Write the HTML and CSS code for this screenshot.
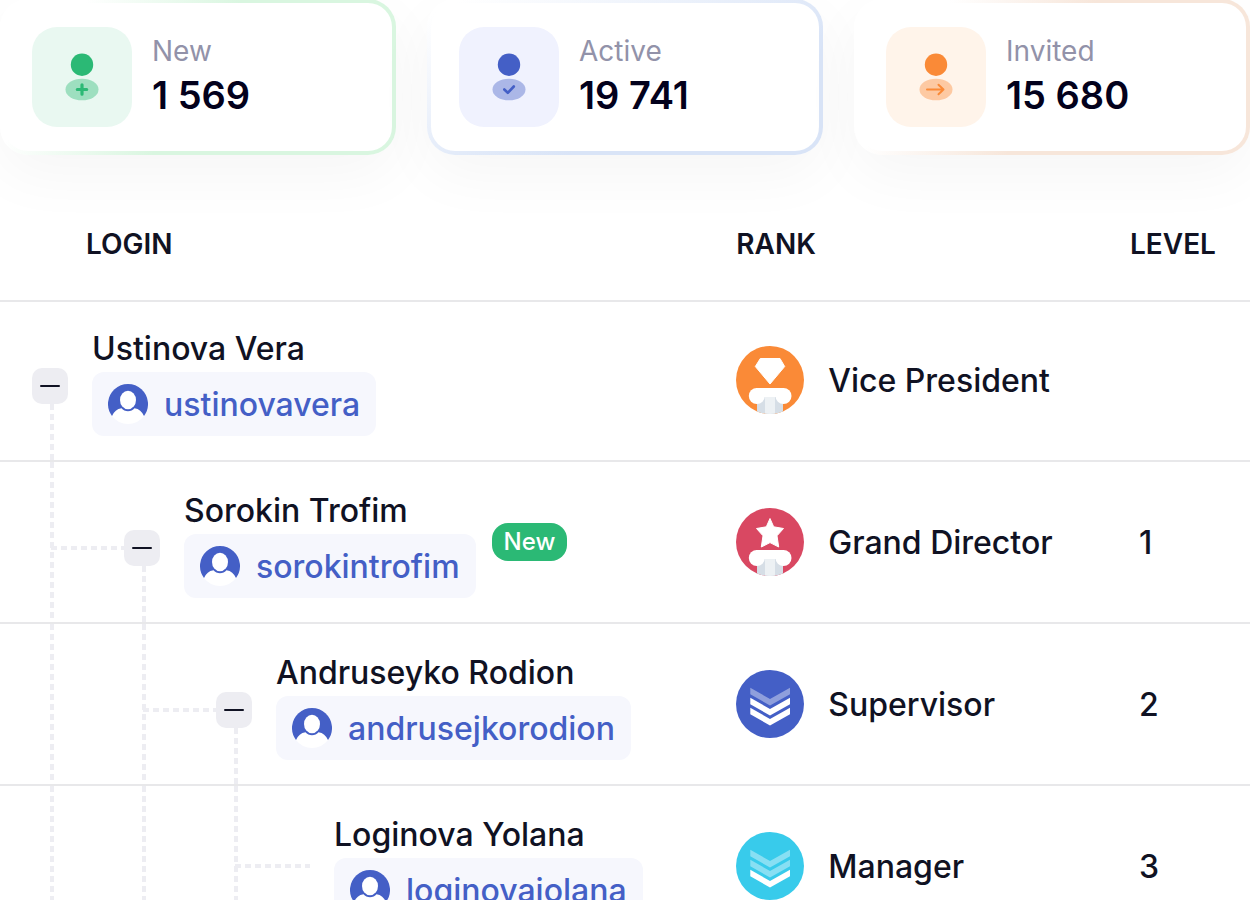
FILE: index.html
```html
<!DOCTYPE html>
<html lang="en">
<head>
    <meta charset="UTF-8">
    <meta name="viewport" content="width=device-width, initial-scale=1.0">
    <title>Team structure</title>
    <link rel="stylesheet" href="styles.css">
</head>
<body>
    <!-- Shared icons -->
    <svg class="sprite" aria-hidden="true">
        <symbol id="avatar" viewBox="0 0 40 40">
            <path d="M4 32A20 20 0 1 1 36 32Z" fill="#445fc6"/>
            <path d="M4 32C6 27.500 9 25 13.500 24.300C16.500 28.200 23.500 28.200 26.500 24.300C31 25 34 27.500 36 32A20 20 0 0 1 4 32Z" fill="#fff"/>
            <ellipse cx="20" cy="16" rx="8" ry="9.300" fill="#fff"/>
        </symbol>
        <symbol id="pillar" viewBox="0 0 68 68">
            <path d="M21 50H47V65.400A34 34 0 0 1 21 65.400Z" fill="#d6dee6"/>
            <path d="M29 50H39V67.600A34 34 0 0 1 29 67.600Z" fill="#edf1f4"/>
            <rect x="20" y="42" width="28" height="9" fill="#fff"/>
            <circle cx="20.800" cy="50" r="8" fill="#fff"/>
            <circle cx="47.500" cy="50" r="8" fill="#fff"/>
        </symbol>
        <symbol id="chevron" viewBox="0 0 68 68">
            <path d="M14.300 17.700L34 29L54 17.700V24.300L34 35.400L14.300 24.300Z"/>
        </symbol>
    </svg>

    <section class="stats">
        <div class="stat stat-new">
            <svg class="stat-icon" viewBox="0 0 100 100">
                <circle cx="50" cy="37.700" r="11.200"/>
                <ellipse cx="50" cy="62.500" rx="16.500" ry="10.800" opacity=".4"/>
                <path d="M50 57.800V67.200M45.300 62.500H54.700" stroke-width="3.200"/>
            </svg>
            <div>
                <div class="stat-label">New</div>
                <div class="stat-value">1 569</div>
            </div>
        </div>
        <div class="stat stat-active">
            <svg class="stat-icon" viewBox="0 0 100 100">
                <circle cx="50" cy="37.700" r="11.200"/>
                <ellipse cx="50" cy="62.500" rx="16.500" ry="10.800" opacity=".4"/>
                <path d="M45.300 62.500L48.800 65.800L54.800 59.500" stroke-width="2.600"/>
            </svg>
            <div>
                <div class="stat-label">Active</div>
                <div class="stat-value">19 741</div>
            </div>
        </div>
        <div class="stat stat-invited">
            <svg class="stat-icon" viewBox="0 0 100 100">
                <circle cx="50" cy="37.700" r="11.200"/>
                <ellipse cx="50" cy="62.500" rx="16.500" ry="10.800" opacity=".4"/>
                <path d="M41 62.500H57.500M52.500 57.800L57.500 62.500L52.500 67.200" stroke-width="2"/>
            </svg>
            <div>
                <div class="stat-label">Invited</div>
                <div class="stat-value">15 680</div>
            </div>
        </div>
    </section>

    <table class="team">
        <thead>
            <tr>
                <th class="col-login">Login</th>
                <th class="col-rank">Rank</th>
                <th class="col-level">Level</th>
            </tr>
        </thead>
        <tbody>
            <tr>
                <td>
                    <div class="tree">
                        <div class="node"><button class="toggle" type="button" aria-label="Collapse"></button></div>
                        <div class="person">
                            <div class="name">Ustinova Vera</div>
                            <a class="chip" href="#"><svg class="avatar"><use href="#avatar"/></svg>ustinovavera</a>
                        </div>
                    </div>
                </td>
                <td>
                    <div class="rank">
                        <svg class="rank-icon" viewBox="0 0 68 68">
                            <circle cx="34" cy="34" r="34" fill="#fa8a37"/>
                            <use href="#pillar"/>
                            <path d="M24.300 12.500H44L48.700 20.500L34 38L19.300 20.500Z" fill="#fff" stroke="#fff" stroke-linejoin="round"/>
                        </svg>
                        Vice President
                    </div>
                </td>
                <td class="level"></td>
            </tr>
            <tr>
                <td>
                    <div class="tree">
                        <div class="guide elbow"></div>
                        <div class="node"><button class="toggle" type="button" aria-label="Collapse"></button></div>
                        <div class="person">
                            <div class="name">Sorokin Trofim</div>
                            <a class="chip" href="#"><svg class="avatar"><use href="#avatar"/></svg>sorokintrofim</a>
                        </div>
                        <span class="badge">New</span>
                    </div>
                </td>
                <td>
                    <div class="rank">
                        <svg class="rank-icon" viewBox="0 0 68 68">
                            <circle cx="34" cy="34" r="34" fill="#d94862"/>
                            <use href="#pillar"/>
                            <path d="M34 10.500L37.700 18.800L47.500 20.500L41 27.800L42.700 39L34 34.600L25.300 39L27 27.800L20.500 20.500L30.300 18.800Z" fill="#fff" stroke="#fff" stroke-linejoin="round"/>
                        </svg>
                        Grand Director
                    </div>
                </td>
                <td class="level">1</td>
            </tr>
            <tr>
                <td>
                    <div class="tree">
                        <div class="guide"></div>
                        <div class="guide elbow"></div>
                        <div class="node"><button class="toggle" type="button" aria-label="Collapse"></button></div>
                        <div class="person">
                            <div class="name">Andruseyko Rodion</div>
                            <a class="chip" href="#"><svg class="avatar"><use href="#avatar"/></svg>andrusejkorodion</a>
                        </div>
                    </div>
                </td>
                <td>
                    <div class="rank">
                        <svg class="rank-icon" viewBox="0 0 68 68" fill="#fff">
                            <circle cx="34" cy="34" r="34" fill="#445fc6"/>
                            <use href="#chevron" opacity=".4"/>
                            <use href="#chevron" y="10"/>
                            <use href="#chevron" y="20"/>
                        </svg>
                        Supervisor
                    </div>
                </td>
                <td class="level">2</td>
            </tr>
            <tr>
                <td>
                    <div class="tree">
                        <div class="guide"></div>
                        <div class="guide"></div>
                        <div class="guide elbow leaf"></div>
                        <div class="person">
                            <div class="name">Loginova Yolana</div>
                            <a class="chip" href="#"><svg class="avatar"><use href="#avatar"/></svg>loginovaiolana</a>
                        </div>
                    </div>
                </td>
                <td>
                    <div class="rank">
                        <svg class="rank-icon" viewBox="0 0 68 68" fill="#fff">
                            <circle cx="34" cy="34" r="34" fill="#38cbeb"/>
                            <use href="#chevron" opacity=".4"/>
                            <use href="#chevron" y="10" opacity=".4"/>
                            <use href="#chevron" y="20"/>
                        </svg>
                        Manager
                    </div>
                </td>
                <td class="level">3</td>
            </tr>
        </tbody>
    </table>
</body>
</html>
```

FILE: styles.css
```css
* {
    box-sizing: border-box;
}
body {
    margin: 0;
    font-family: Inter, "Liberation Sans", sans-serif;
    font-size: 32px;
    font-weight: 500;
    color: #101223;
    background-color: #fff;
}
.sprite {
    display: none;
}

/* Stat cards */
.stats {
    display: grid;
    grid-template-columns: repeat(3, 1fr);
    gap: 31px;
    margin-top: -1px;
}
.stat {
    display: flex;
    align-items: center;
    gap: 20px;
    padding: 24px 28px;
    border: 4px solid transparent;
    border-radius: 28px;
    box-shadow: 0 20px 60px rgba(0, 0, 0, 0.04);
}
.stat-icon {
    width: 100px;
    height: 100px;
    border-radius: 25px;
    flex-shrink: 0;
}
.stat-icon path {
    fill: none;
    stroke-linecap: round;
    stroke-linejoin: round;
}
.stat-new {
    background: linear-gradient(#fff, #fff) padding-box, linear-gradient(120deg, #fff 18%, #d9f6e0 50%) border-box;
}
.stat-new .stat-icon {
    background-color: #e9f8f1;
    fill: #2bb975;
}
.stat-new path {
    stroke: #2bb975;
}
.stat-active {
    background: linear-gradient(#fff, #fff) padding-box, linear-gradient(155deg, #fff 5%, #d9e4f7 65%) border-box;
}
.stat-active .stat-icon {
    background-color: #f0f2fe;
    fill: #445fc6;
}
.stat-active path {
    stroke: #445fc6;
}
.stat-invited {
    background: linear-gradient(#fff, #fff) padding-box, linear-gradient(120deg, #fff 20%, #f7e6da 50%) border-box;
}
.stat-invited .stat-icon {
    background-color: #fff4ea;
    fill: #fa8a37;
}
.stat-invited path {
    stroke: #fa8a37;
}
.stat-label {
    font-size: 28px;
    font-weight: 400;
    line-height: 36px;
    color: #9292a9;
}
.stat-value {
    font-size: 38px;
    font-weight: 600;
    line-height: 52px;
    color: #03011c;
}

/* Team table */
.team {
    width: 100%;
    margin-top: 33px;
    border-collapse: separate;
    border-spacing: 0;
    table-layout: fixed;
}
.team th {
    height: 112px;
    padding: 0;
    font-size: 28px;
    font-weight: 600;
    text-align: left;
    text-transform: uppercase;
    box-shadow: 0 2px 0 #e8e8ea;
}
.team .col-login {
    width: 58.9%;
    padding-left: 86px;
}
.col-rank {
    width: 31.5%;
}
.team td {
    padding: 0;
    border-bottom: 2px solid #e8e8ea;
}
.team .level {
    padding-left: 9px;
}
.tree {
    display: flex;
    padding-left: 32px;
}
.guide {
    width: 92px;
    background: repeating-linear-gradient(#ededf2 0 6px, transparent 6px 10px) 18px 0 / 4px 100% no-repeat;
}
.elbow {
    background:
        repeating-linear-gradient(#ededf2 0 6px, transparent 6px 10px) 18px 0 / 4px 100% no-repeat,
        repeating-linear-gradient(90deg, #ededf2 0 6px, transparent 6px 10px) 19px 84px / 100% 4px no-repeat;
}
.leaf {
    width: 94px;
    margin-right: 24px;
    background-position: 18px 0, 19px 78px;
}
.node {
    display: flex;
    flex-direction: column;
    width: 36px;
    margin-right: 24px;
    padding-top: 68px;
}
.node::after {
    content: "";
    flex: 1;
    width: 4px;
    margin-left: 18px;
    background: repeating-linear-gradient(#ededf2 0 6px, transparent 6px 10px);
}
.toggle {
    display: flex;
    align-items: center;
    justify-content: center;
    width: 36px;
    height: 36px;
    padding: 0;
    border: none;
    border-radius: 10px;
    background-color: #ededf2;
    cursor: pointer;
}
.toggle::before {
    content: "";
    width: 20px;
    height: 2px;
    border-radius: 1px;
    background-color: #101223;
}
.person {
    padding: 26px 0 24px;
}
.name {
    line-height: 46px;
}
.chip {
    display: flex;
    align-items: center;
    gap: 16px;
    width: fit-content;
    height: 64px;
    padding: 0 16px;
    border-radius: 12px;
    background-color: #f6f7fd;
    color: #445fc6;
    text-decoration: none;
}
.avatar {
    width: 40px;
    height: 40px;
}
.badge {
    align-self: center;
    margin-left: 16px;
    padding: 0 12px;
    border-radius: 16px;
    background-color: #2bb975;
    color: #fff;
    font-size: 24px;
    line-height: 38px;
}
.rank {
    display: flex;
    align-items: center;
    gap: 24px;
}
.rank-icon {
    width: 68px;
    height: 68px;
}
```
